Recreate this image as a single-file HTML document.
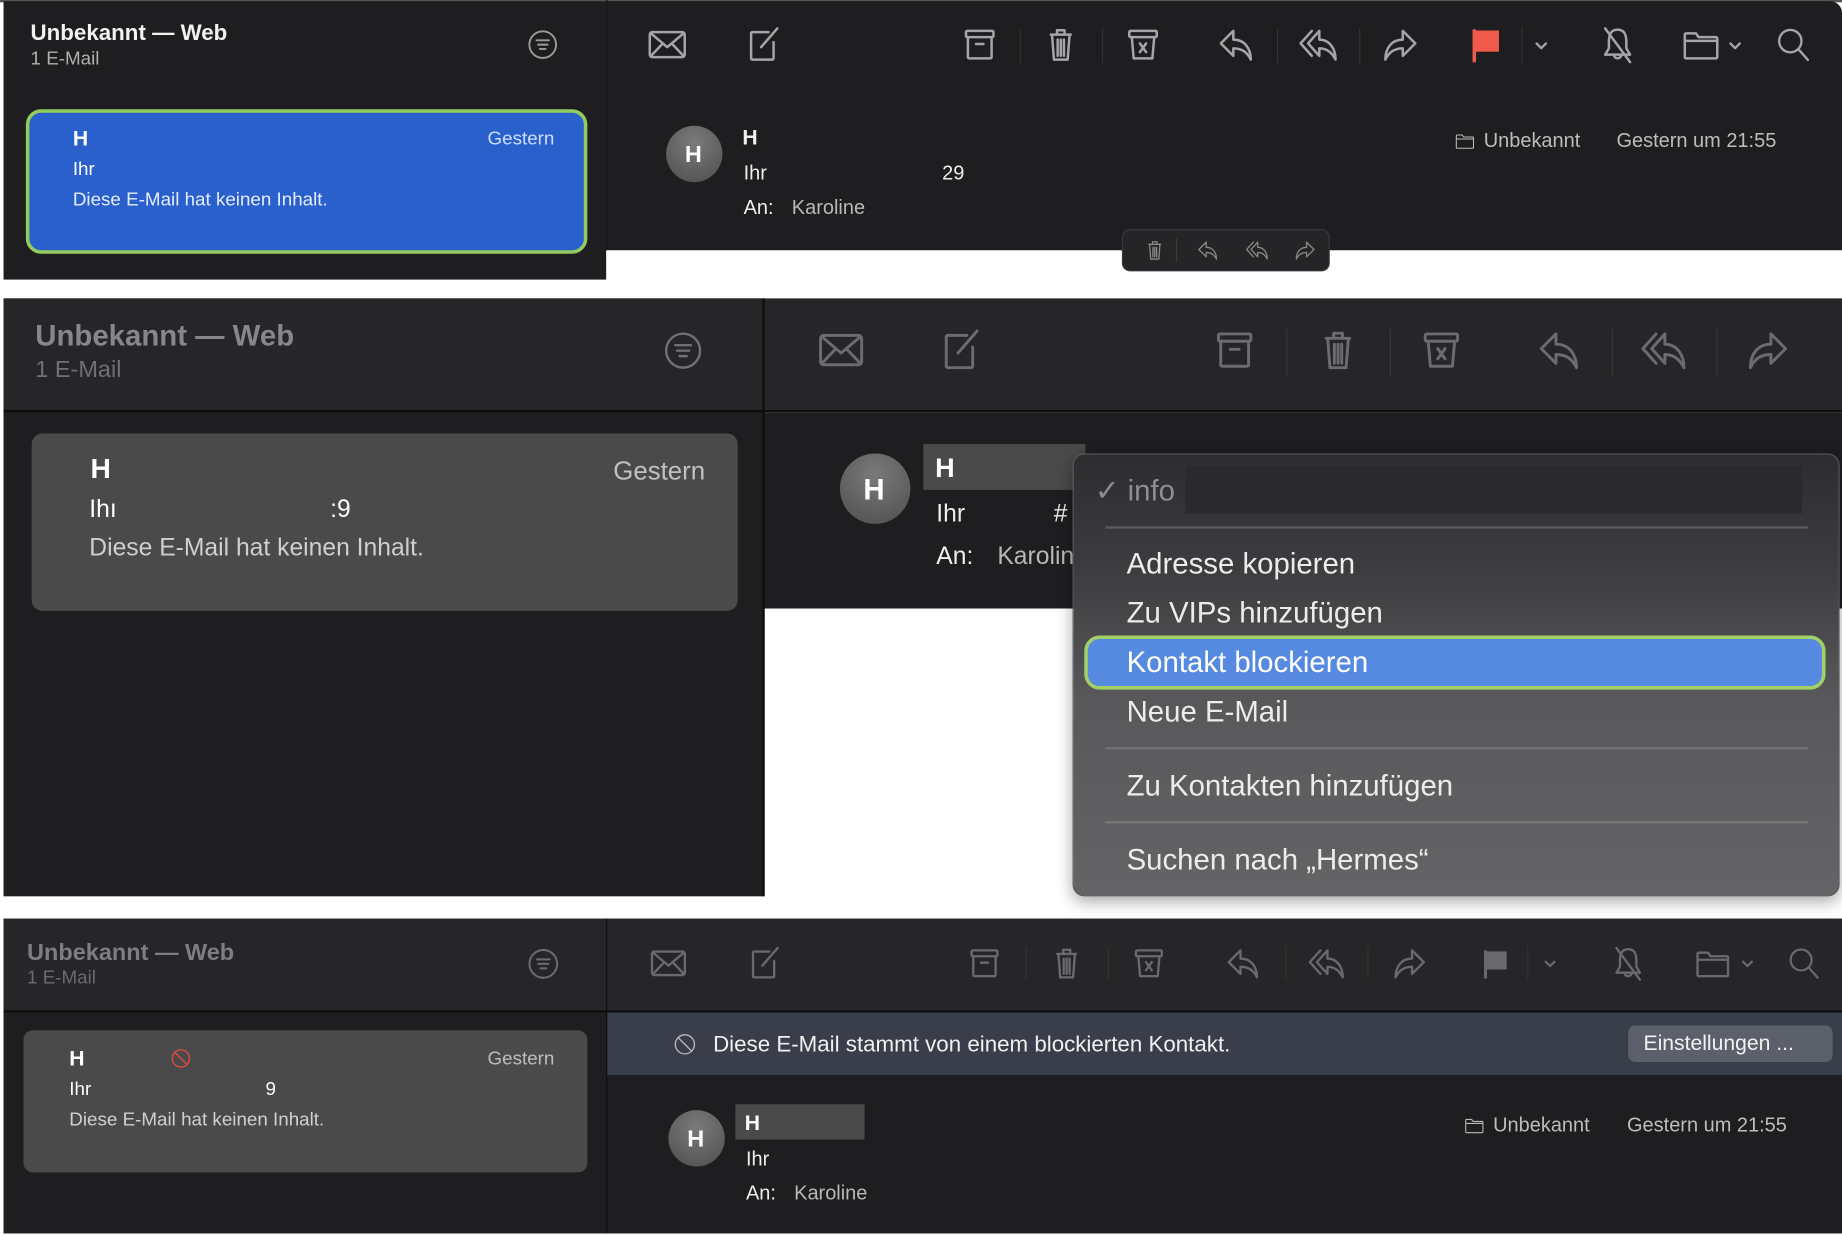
<!DOCTYPE html>
<html><head><meta charset="utf-8">
<style>
html,body{margin:0;padding:0;background:#fff;width:1842px;height:1236px;overflow:hidden}
#w{position:absolute;left:0;top:0;width:1568px;height:1052px;transform:scale(1.17474);transform-origin:0 0;font-family:"Liberation Sans",sans-serif}
.a{position:absolute}
.t{position:absolute;white-space:nowrap;line-height:1}
svg.i{position:absolute;fill:none;stroke:currentColor;stroke-width:2;stroke-linecap:round;stroke-linejoin:round;overflow:visible}
.sep{position:absolute;width:1px}
</style></head><body>
<svg width="0" height="0" style="position:absolute">
<defs>
<symbol id="env" viewBox="0 0 32 32"><rect x="2" y="6" width="28" height="20" rx="2"/><path d="M3 7 L16 18 L29 7 M3 25 L12.5 15 M29 25 L19.5 15"/></symbol>
<symbol id="cmp" viewBox="0 0 32 32"><path d="M20 6 H7 a1 1 0 0 0 -1 1 V27 a1 1 0 0 0 1 1 H23 a1 1 0 0 0 1 -1 V14"/><path d="M14 18 L27 3"/></symbol>
<symbol id="arc" viewBox="0 0 32 32"><rect x="5" y="5" width="22" height="5" rx="1"/><path d="M6.5 10 V26 a1 1 0 0 0 1 1 H24.5 a1 1 0 0 0 1 -1 V10 M13 15.5 H19"/></symbol>
<symbol id="tr" viewBox="0 0 32 32"><path d="M8 8 H24 M13 8 V4.5 H19 V8 M9 8.5 L10.5 28 H21.5 L23 8.5 M13.5 12 V25 M16 12 V25 M18.5 12 V25"/></symbol>
<symbol id="trx" viewBox="0 0 32 32"><rect x="5" y="5" width="22" height="5" rx="1"/><path d="M7 10 L8.5 27 H23.5 L25 10 M13.5 15 L18.5 22 M18.5 15 L13.5 22"/></symbol>
<symbol id="rp" viewBox="0 0 32 32"><path d="M14 5 L4 15 L14 25 V19 C21 19 25 22 28 28 C28 19 23 12 14 12 Z"/></symbol>
<symbol id="rpa" viewBox="0 0 32 32"><path d="M17 5 L8 15 L17 25 V19 C23 19 27 22 30 28 C30 19 25 12 17 12 Z M11 5 L2 15 L11 25"/></symbol>
<symbol id="fw" viewBox="0 0 32 32"><path d="M18 5 L28 15 L18 25 V19 C11 19 7 22 4 28 C4 19 9 12 18 12 Z"/></symbol>
<symbol id="chv" viewBox="0 0 16 16"><path d="M4 6 L8 10 L12 6"/></symbol>
<symbol id="bell" viewBox="0 0 32 32"><path d="M16 4 C10 4 9 9 9 14 V19 L6 24 H26 L23 19 V14 C23 9 22 4 16 4 Z M13 24 a3 3 0 0 0 6 0 M6 3 L26 30"/></symbol>
<symbol id="fld" viewBox="0 0 32 32"><path d="M3 8 a1 1 0 0 1 1 -1 H12 L14 10 H28 a1 1 0 0 1 1 1 V26 a1 1 0 0 1 -1 1 H4 a1 1 0 0 1 -1 -1 Z M3 13 H29"/></symbol>
<symbol id="srch" viewBox="0 0 32 32"><circle cx="13" cy="13" r="9.5"/><path d="M20 20 L28 29"/></symbol>
<symbol id="flt" viewBox="0 0 32 32"><circle cx="16" cy="16" r="14"/><path d="M9.5 11.5 H22.5 M11 16 H21 M13 20.5 H19"/></symbol>
<symbol id="blk" viewBox="0 0 32 32"><circle cx="16" cy="16" r="13"/><path d="M7 7 L25 25"/></symbol>
</defs></svg>
<div id="w">

<!-- PANEL 1 -->
<div class="a" style="left:0;top:0;width:1568px;height:2px;background:#555"></div>
<div class="a" style="left:3px;top:1px;width:513px;height:237px;background:#1e1e21"></div>
<div class="a" style="left:516px;top:1px;width:1052px;height:212px;background:#1e1e21;border-top-right-radius:10px"></div>
<div class="a" style="left:516px;top:0;width:1px;height:213px;background:#111"></div>
<div class="t" style="left:26px;top:19px;font-size:19px;font-weight:bold;color:#f2f2f2">Unbekannt — Web</div>
<div class="t" style="left:26px;top:43px;font-size:16px;color:#b0b0b0">1 E-Mail</div>
<svg class="i" style="left:449px;top:25px;width:26px;height:26px;color:#9a9a9a"><use href="#flt"/></svg>
<div class="a" style="left:22px;top:93px;width:472px;height:117px;background:#2a60cb;border:3px solid #93cc5e;border-radius:13px"></div>
<div class="t" style="left:62px;top:109px;font-size:18px;font-weight:bold;color:#fff">H</div>
<div class="t" style="left:415px;top:111px;font-size:16px;color:#cfdcff">Gestern</div>
<div class="t" style="left:62px;top:137px;font-size:16px;color:#fff">Ihr</div>
<div class="t" style="left:62px;top:163px;font-size:16px;color:#e6ecff">Diese E-Mail hat keinen Inhalt.</div>

<g></g>
<div style="color:#a5a5a7">
<svg class="i" style="left:551px;top:21px;width:34px;height:34px"><use href="#env"/></svg>
<svg class="i" style="left:633px;top:21px;width:34px;height:34px"><use href="#cmp"/></svg>
<svg class="i" style="left:817px;top:21px;width:34px;height:34px"><use href="#arc"/></svg>
<svg class="i" style="left:886px;top:21px;width:34px;height:34px"><use href="#tr"/></svg>
<svg class="i" style="left:956px;top:21px;width:34px;height:34px"><use href="#trx"/></svg>
<svg class="i" style="left:1035px;top:21px;width:34px;height:34px"><use href="#rp"/></svg>
<svg class="i" style="left:1105px;top:21px;width:34px;height:34px"><use href="#rpa"/></svg>
<svg class="i" style="left:1175px;top:21px;width:34px;height:34px"><use href="#fw"/></svg>
<svg class="i" style="left:1304px;top:31px;width:16px;height:16px"><use href="#chv"/></svg>
<svg class="i" style="left:1360px;top:21px;width:34px;height:34px"><use href="#bell"/></svg>
<svg class="i" style="left:1431px;top:21px;width:34px;height:34px"><use href="#fld"/></svg>
<svg class="i" style="left:1469px;top:31px;width:16px;height:16px"><use href="#chv"/></svg>
<svg class="i" style="left:1511px;top:22px;width:32px;height:32px"><use href="#srch"/></svg>
</div>
<svg class="a" style="left:1252px;top:24px;width:28px;height:30px" viewBox="0 0 28 30"><path d="M3 2 H24 V20 H3 Z" fill="#ef5a4c"/><path d="M3 1 V29" stroke="#ef5a4c" stroke-width="3"/></svg>
<div class="sep" style="left:868px;top:24px;height:30px;background:#333"></div>
<div class="sep" style="left:938px;top:24px;height:30px;background:#333"></div>
<div class="sep" style="left:1087px;top:24px;height:30px;background:#333"></div>
<div class="sep" style="left:1157px;top:24px;height:30px;background:#333"></div>
<div class="sep" style="left:1295px;top:24px;height:30px;background:#333"></div>

<div class="a" style="left:567px;top:107px;width:48px;height:48px;border-radius:50%;background:radial-gradient(circle at 50% 30%,#7a7a7a,#4e4e4e)"></div>
<div class="t" style="left:583px;top:122px;font-size:20px;font-weight:bold;color:#fff">H</div>
<div class="t" style="left:632px;top:108px;font-size:18px;font-weight:bold;color:#f0f0f0">H</div>
<div class="t" style="left:633px;top:139px;font-size:17px;color:#eee">Ihr</div>
<div class="t" style="left:802px;top:139px;font-size:17px;color:#eee">29</div>
<div class="t" style="left:633px;top:168px;font-size:17px;color:#eee">An:</div>
<div class="t" style="left:674px;top:168px;font-size:17px;color:#b8b8b8">Karoline</div>
<svg class="i" style="left:1238px;top:111px;width:18px;height:18px;color:#bbb;stroke-width:1.6"><use href="#fld"/></svg>
<div class="t" style="left:1263px;top:111px;font-size:17px;color:#bdbdbd">Unbekannt</div>
<div class="t" style="left:1376px;top:111px;font-size:17px;color:#bdbdbd">Gestern um 21:55</div>
<div class="a" style="left:955px;top:195px;width:175px;height:34px;background:#252527;border:1px solid #3a3a3c;border-radius:7px;color:#888">
<svg class="i" style="left:17px;top:7px;width:20px;height:20px;stroke-width:1.8"><use href="#tr"/></svg>
<div class="sep" style="left:45px;top:7px;height:20px;background:#3a3a3a"></div>
<svg class="i" style="left:62px;top:7px;width:20px;height:20px;stroke-width:1.8"><use href="#rp"/></svg>
<svg class="i" style="left:104px;top:7px;width:20px;height:20px;stroke-width:1.8"><use href="#rpa"/></svg>
<svg class="i" style="left:145px;top:7px;width:20px;height:20px;stroke-width:1.8"><use href="#fw"/></svg>
</div>

<!-- PANEL 2 -->
<div class="a" style="left:3px;top:254px;width:647px;height:509px;background:#1e1e21"></div>
<div class="a" style="left:3px;top:254px;width:1565px;height:95px;background:#262629"></div>
<div class="a" style="left:3px;top:349px;width:1565px;height:2px;background:#0e0e0e"></div>
<div class="a" style="left:650px;top:351px;width:918px;height:167px;background:#1e1e21"></div>
<div class="a" style="left:649px;top:254px;width:2px;height:509px;background:#0e0e0e"></div>
<div class="t" style="left:30px;top:274px;font-size:25px;font-weight:bold;color:#87878a">Unbekannt — Web</div>
<div class="t" style="left:30px;top:305px;font-size:20px;color:#707073">1 E-Mail</div>
<svg class="i" style="left:565px;top:282px;width:33px;height:33px;color:#707073"><use href="#flt"/></svg>
<div class="a" style="left:27px;top:369px;width:601px;height:151px;background:#4a4a4b;border-radius:9px"></div>
<div class="t" style="left:77px;top:388px;font-size:24px;font-weight:bold;color:#fff">H</div>
<div class="t" style="left:522px;top:390px;font-size:22px;color:#c0c0c0">Gestern</div>
<div class="t" style="left:76px;top:423px;font-size:21px;color:#fff">Ihı</div>
<div class="t" style="left:281px;top:423px;font-size:21px;color:#fff">:9</div>
<div class="t" style="left:76px;top:456px;font-size:21px;color:#cfcfcf">Diese E-Mail hat keinen Inhalt.</div>
<div style="color:#6c6c6f">
<svg class="i" style="left:696px;top:278px;width:40px;height:40px"><use href="#env"/></svg>
<svg class="i" style="left:798px;top:278px;width:40px;height:40px"><use href="#cmp"/></svg>
<svg class="i" style="left:1031px;top:278px;width:40px;height:40px"><use href="#arc"/></svg>
<svg class="i" style="left:1119px;top:278px;width:40px;height:40px"><use href="#tr"/></svg>
<svg class="i" style="left:1207px;top:278px;width:40px;height:40px"><use href="#trx"/></svg>
<svg class="i" style="left:1307px;top:278px;width:40px;height:40px"><use href="#rp"/></svg>
<svg class="i" style="left:1396px;top:278px;width:40px;height:40px"><use href="#rpa"/></svg>
<svg class="i" style="left:1485px;top:278px;width:40px;height:40px"><use href="#fw"/></svg>
</div>
<div class="sep" style="left:1095px;top:280px;height:40px;background:#38383a"></div>
<div class="sep" style="left:1183px;top:280px;height:40px;background:#38383a"></div>
<div class="sep" style="left:1372px;top:280px;height:40px;background:#38383a"></div>
<div class="sep" style="left:1461px;top:280px;height:40px;background:#38383a"></div>
<div class="a" style="left:715px;top:386px;width:60px;height:60px;border-radius:50%;background:radial-gradient(circle at 50% 30%,#7a7a7a,#4e4e4e)"></div>
<div class="t" style="left:735px;top:405px;font-size:25px;font-weight:bold;color:#fff">H</div>
<div class="a" style="left:786px;top:378px;width:138px;height:39px;background:#4a4a4b"></div>
<div class="t" style="left:796px;top:387px;font-size:23px;font-weight:bold;color:#fff">H</div>
<div class="t" style="left:797px;top:427px;font-size:21px;color:#eee">Ihr</div>
<div class="t" style="left:897px;top:427px;font-size:21px;color:#eee">#</div>
<div class="t" style="left:797px;top:463px;font-size:21px;color:#eee">An:</div>
<div class="t" style="left:849px;top:463px;font-size:21px;color:#b8b8b8">Karoline</div>
<div class="a" style="left:913px;top:386px;width:651px;height:375px;border:1px solid #58585a;border-radius:10px;background:linear-gradient(#2d2d30 0%,#3c3c3f 25%,#58585a 55%,#646466 100%);box-shadow:0 4px 14px rgba(0,0,0,.35);overflow:hidden">
<div class="a" style="left:95px;top:10px;width:525px;height:40px;background:#2a2a2d"></div>
<div class="t" style="left:18px;top:19px;font-size:25px;color:#8e8e90">✓ info</div>
<div class="a" style="left:27px;top:61px;width:598px;height:2px;background:#5a5a5c"></div>
<div class="t" style="left:45px;top:81px;font-size:25px;color:#ececec">Adresse kopieren</div>
<div class="t" style="left:45px;top:123px;font-size:25px;color:#ececec">Zu VIPs hinzufügen</div>
<div class="a" style="left:9px;top:154px;width:625px;height:40px;background:#5689e0;border:3px solid #a3d065;border-radius:13px"></div>
<div class="t" style="left:45px;top:165px;font-size:25px;color:#fff">Kontakt blockieren</div>
<div class="t" style="left:45px;top:207px;font-size:25px;color:#ececec">Neue E-Mail</div>
<div class="a" style="left:27px;top:249px;width:598px;height:2px;background:#727274"></div>
<div class="t" style="left:45px;top:270px;font-size:25px;color:#ececec">Zu Kontakten hinzufügen</div>
<div class="a" style="left:27px;top:312px;width:598px;height:2px;background:#777779"></div>
<div class="t" style="left:45px;top:333px;font-size:25px;color:#ececec">Suchen nach „Hermes“</div>
</div>

<!-- PANEL 3 -->
<div class="a" style="left:3px;top:782px;width:1565px;height:268px;background:#1e1e21"></div>
<div class="a" style="left:3px;top:782px;width:1565px;height:78px;background:#262629"></div>
<div class="a" style="left:3px;top:860px;width:1565px;height:2px;background:#0e0e0e"></div>
<div class="a" style="left:516px;top:782px;width:1px;height:268px;background:#0e0e0e"></div>
<div class="t" style="left:23px;top:801px;font-size:20px;font-weight:bold;color:#7e7e81">Unbekannt — Web</div>
<div class="t" style="left:23px;top:825px;font-size:16px;color:#6c6c6f">1 E-Mail</div>
<svg class="i" style="left:449px;top:807px;width:27px;height:27px;color:#6c6c6f"><use href="#flt"/></svg>
<div style="color:#6a6a6d">
<svg class="i" style="left:553px;top:804px;width:32px;height:32px"><use href="#env"/></svg>
<svg class="i" style="left:635px;top:804px;width:32px;height:32px"><use href="#cmp"/></svg>
<svg class="i" style="left:822px;top:804px;width:32px;height:32px"><use href="#arc"/></svg>
<svg class="i" style="left:892px;top:804px;width:32px;height:32px"><use href="#tr"/></svg>
<svg class="i" style="left:962px;top:804px;width:32px;height:32px"><use href="#trx"/></svg>
<svg class="i" style="left:1042px;top:804px;width:32px;height:32px"><use href="#rp"/></svg>
<svg class="i" style="left:1113px;top:804px;width:32px;height:32px"><use href="#rpa"/></svg>
<svg class="i" style="left:1184px;top:804px;width:32px;height:32px"><use href="#fw"/></svg>
<svg class="i" style="left:1312px;top:813px;width:15px;height:15px"><use href="#chv"/></svg>
<svg class="i" style="left:1370px;top:804px;width:32px;height:32px"><use href="#bell"/></svg>
<svg class="i" style="left:1442px;top:804px;width:32px;height:32px"><use href="#fld"/></svg>
<svg class="i" style="left:1480px;top:813px;width:15px;height:15px"><use href="#chv"/></svg>
<svg class="i" style="left:1521px;top:805px;width:30px;height:30px"><use href="#srch"/></svg>
</div>
<svg class="a" style="left:1262px;top:808px;width:24px;height:26px" viewBox="0 0 28 30"><path d="M3 2 H24 V20 H3 Z" fill="#6a6a6d"/><path d="M3 1 V29" stroke="#6a6a6d" stroke-width="3"/></svg>
<div class="sep" style="left:873px;top:806px;height:28px;background:#333"></div>
<div class="sep" style="left:943px;top:806px;height:28px;background:#333"></div>
<div class="sep" style="left:1094px;top:806px;height:28px;background:#333"></div>
<div class="sep" style="left:1164px;top:806px;height:28px;background:#333"></div>
<div class="sep" style="left:1300px;top:806px;height:28px;background:#333"></div>
<div class="a" style="left:20px;top:877px;width:480px;height:121px;background:#4a4a4b;border-radius:8px"></div>
<div class="t" style="left:59px;top:892px;font-size:18px;font-weight:bold;color:#fff">H</div>
<svg class="i" style="left:145px;top:892px;width:18px;height:18px;color:#e5493d"><use href="#blk"/></svg>
<div class="t" style="left:415px;top:894px;font-size:16px;color:#bdbdbd">Gestern</div>
<div class="t" style="left:59px;top:920px;font-size:16px;color:#fff">Ihr</div>
<div class="t" style="left:226px;top:920px;font-size:16px;color:#fff">9</div>
<div class="t" style="left:59px;top:946px;font-size:16px;color:#d0d0d0">Diese E-Mail hat keinen Inhalt.</div>
<div class="a" style="left:517px;top:862px;width:1051px;height:53px;background:#3a3e4a"></div>
<svg class="i" style="left:573px;top:879px;width:20px;height:20px;color:#bbb;stroke-width:1.8"><use href="#blk"/></svg>
<div class="t" style="left:607px;top:880px;font-size:19px;color:#f0f0f0">Diese E-Mail stammt von einem blockierten Kontakt.</div>
<div class="a" style="left:1386px;top:873px;width:174px;height:31px;background:#5b606b;border-radius:6px"></div>
<div class="t" style="left:1399px;top:879px;font-size:18px;color:#f2f2f2">Einstellungen ...</div>
<div class="a" style="left:569px;top:945px;width:48px;height:48px;border-radius:50%;background:radial-gradient(circle at 50% 30%,#7a7a7a,#4e4e4e)"></div>
<div class="t" style="left:585px;top:960px;font-size:20px;font-weight:bold;color:#fff">H</div>
<div class="a" style="left:626px;top:940px;width:110px;height:30px;background:#4a4a4b"></div>
<div class="t" style="left:634px;top:947px;font-size:18px;font-weight:bold;color:#fff">H</div>
<div class="t" style="left:635px;top:978px;font-size:17px;color:#eee">Ihr</div>
<div class="t" style="left:635px;top:1007px;font-size:17px;color:#eee">An:</div>
<div class="t" style="left:676px;top:1007px;font-size:17px;color:#b8b8b8">Karoline</div>
<svg class="i" style="left:1246px;top:949px;width:18px;height:18px;color:#bbb;stroke-width:1.6"><use href="#fld"/></svg>
<div class="t" style="left:1271px;top:949px;font-size:17px;color:#bdbdbd">Unbekannt</div>
<div class="t" style="left:1385px;top:949px;font-size:17px;color:#bdbdbd">Gestern um 21:55</div>
</div>
</body></html>
